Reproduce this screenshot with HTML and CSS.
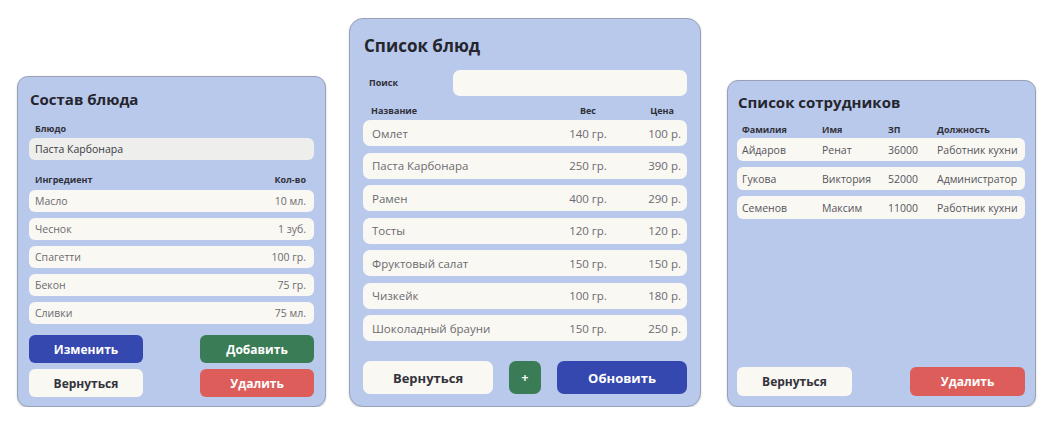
FILE: index.html
```html
<!DOCTYPE html>
<html lang="ru">
<head>
<meta charset="utf-8">
<link rel="stylesheet" href="styles.css">
</head>
<body>
<main class="stage">
  <section class="card card-compose">
    <h2 class="title">Состав блюда</h2>
    <div class="label">Блюдо</div>
    <div class="field">Паста Карбонара</div>
    <div class="head-row"><span>Ингредиент</span><span>Кол-во</span></div>
    <ul class="rows">
      <li class="row"><span>Масло</span><span>10 мл.</span></li>
      <li class="row"><span>Чеснок</span><span>1 зуб.</span></li>
      <li class="row"><span>Спагетти</span><span>100 гр.</span></li>
      <li class="row"><span>Бекон</span><span>75 гр.</span></li>
      <li class="row"><span>Сливки</span><span>75 мл.</span></li>
    </ul>
    <div class="btn-grid">
      <button class="btn blue">Изменить</button>
      <button class="btn green">Добавить</button>
      <button class="btn light">Вернуться</button>
      <button class="btn red">Удалить</button>
    </div>
  </section>

  <section class="card card-menu">
    <h2 class="title big">Список блюд</h2>
    <div class="search"><span class="label">Поиск</span><div class="search-input"></div></div>
    <div class="menu-head"><span>Название</span><span class="c">Вес</span><span class="r hr">Цена</span></div>
    <ul class="menu-rows">
      <li class="mrow"><span>Омлет</span><span class="c">140 гр.</span><span class="r">100 р.</span></li>
      <li class="mrow"><span>Паста Карбонара</span><span class="c">250 гр.</span><span class="r">390 р.</span></li>
      <li class="mrow"><span>Рамен</span><span class="c">400 гр.</span><span class="r">290 р.</span></li>
      <li class="mrow"><span>Тосты</span><span class="c">120 гр.</span><span class="r">120 р.</span></li>
      <li class="mrow"><span>Фруктовый салат</span><span class="c">150 гр.</span><span class="r">150 р.</span></li>
      <li class="mrow"><span>Чизкейк</span><span class="c">100 гр.</span><span class="r">180 р.</span></li>
      <li class="mrow"><span>Шоколадный брауни</span><span class="c">150 гр.</span><span class="r">250 р.</span></li>
    </ul>
    <div class="menu-btns">
      <button class="btn light wide">Вернуться</button>
      <button class="btn green plus">+</button>
      <button class="btn blue wide">Обновить</button>
    </div>
  </section>

  <section class="card card-staff">
    <h2 class="title">Список сотрудников</h2>
    <div class="staff-head"><span>Фамилия</span><span>Имя</span><span>ЗП</span><span>Должность</span></div>
    <ul class="staff-rows">
      <li class="srow"><span>Айдаров</span><span>Ренат</span><span>36000</span><span>Работник кухни</span></li>
      <li class="srow"><span>Гукова</span><span>Виктория</span><span>52000</span><span>Администратор</span></li>
      <li class="srow"><span>Семенов</span><span>Максим</span><span>11000</span><span>Работник кухни</span></li>
    </ul>
    <div class="staff-btns">
      <button class="btn light">Вернуться</button>
      <button class="btn red">Удалить</button>
    </div>
  </section>
</main>
</body>
</html>
```

FILE: styles.css
```css
* { box-sizing: border-box; }
html, body { margin: 0; padding: 0; background: #ffffff; }
body {
  font-family: "Open Sans", "Noto Sans", sans-serif;
  color: #2b2b33;
}
ul { list-style: none; margin: 0; padding: 0; }
h2 { margin: 0; }

.stage {
  display: flex;
  align-items: flex-end;
  height: 407px;
  padding-left: 17px;
}

.card {
  background: #b9c9ec;
  border: 1px solid #98a1b6;
  border-radius: 11px;
  box-shadow: 0 1px 2px rgba(60, 70, 90, 0.25);
  display: flex;
  flex-direction: column;
}

.title {
  font-size: 15px;
  font-weight: 700;
  line-height: 20px;
  color: #25252d;
}
.title.big { font-size: 17px; line-height: 22px; }

.label {
  font-size: 9px;
  font-weight: 700;
  line-height: 12px;
  color: #303038;
}

/* card 1 */
.card-compose {
  width: 309px;
  height: 331px;
  padding: 12px 11px 8px 11px;
}
.card-compose .title { margin-left: 1px; }
.card-compose .label { margin-top: 14px; margin-left: 6px; }
.field {
  margin-top: 3px;
  height: 22px;
  background: #eeeeec;
  border-radius: 6px;
  font-size: 10.5px;
  line-height: 22px;
  padding-left: 6px;
  color: #3a3a40;
}
.head-row {
  margin-top: 14px;
  display: flex;
  justify-content: space-between;
  font-size: 9px;
  font-weight: 700;
  line-height: 12px;
  padding: 0 8px 0 6px;
  color: #303038;
}
.rows {
  margin-top: 4px;
  display: flex;
  flex-direction: column;
  gap: 6px;
}
.row {
  height: 22px;
  background: #faf8f3;
  border-radius: 6px;
  display: flex;
  justify-content: space-between;
  align-items: center;
  padding: 0 8px 0 6px;
  font-size: 10.5px;
  color: #6b6b70;
}
.btn-grid {
  margin-top: 11px;
  display: grid;
  grid-template-columns: 114px 114px;
  justify-content: space-between;
  row-gap: 6px;
}

.btn {
  border: none;
  border-radius: 6px;
  font-family: "Open Sans", "Noto Sans", sans-serif;
  font-weight: 700;
  font-size: 12px;
  height: 28px;
  padding: 0;
  color: #ffffff;
}
.btn.blue { background: #3548b0; }
.btn.green { background: #3a7c55; }
.btn.red { background: #dd5d5b; }
.btn.light { background: #faf8f3; color: #33333b; }

/* card 2 */
.card-menu {
  width: 352px;
  height: 389px;
  margin-left: 23px;
  border-radius: 14px;
  padding: 16px 13px 12px 13px;
}
.card-menu .title { margin-left: 1px; }
.search {
  margin-top: 13px;
  display: flex;
  align-items: center;
  justify-content: space-between;
}
.search .label { margin-left: 6px; }
.search-input {
  width: 234px;
  height: 26px;
  background: #faf8f3;
  border-radius: 7px;
}
.menu-head, .mrow {
  display: grid;
  grid-template-columns: 1fr 40px 73px;
}
.menu-head {
  margin-top: 9px;
  font-size: 9px;
  font-weight: 700;
  line-height: 12px;
  padding: 0 6px 0 8px;
  color: #303038;
}
.c { text-align: center; }
.r { text-align: right; }
.hr { padding-right: 7px; }
.menu-rows {
  margin-top: 3px;
  display: flex;
  flex-direction: column;
  gap: 6.5px;
}
.mrow {
  height: 26px;
  background: #faf8f3;
  border-radius: 7px;
  align-items: center;
  padding: 0 6px 0 9px;
  font-size: 11.5px;
  color: #6b6b70;
  white-space: nowrap;
}
.menu-btns {
  margin-top: 20px;
  display: flex;
  justify-content: space-between;
}
.menu-btns .btn { height: 33px; font-size: 13px; border-radius: 7px; }
.menu-btns .wide { width: 130px; }
.menu-btns .plus { width: 32px; font-size: 12px; }

/* card 3 */
.card-staff {
  width: 309px;
  height: 327px;
  margin-left: 26px;
  padding: 11px 10px 10px 9px;
}
.card-staff .title { margin-left: 1px; }
.staff-head, .srow {
  display: grid;
  grid-template-columns: 80px 66px 49px 1fr;
}
.staff-head {
  margin-top: 12px;
  font-size: 9px;
  font-weight: 700;
  line-height: 12px;
  padding-left: 5px;
  color: #303038;
}
.staff-rows {
  margin-top: 2px;
  display: flex;
  flex-direction: column;
  gap: 6px;
}
.srow {
  height: 23px;
  background: #faf8f3;
  border-radius: 6px;
  align-items: center;
  padding-left: 5px;
  font-size: 10.5px;
  color: #55555b;
}
.staff-btns {
  margin-top: auto;
  display: flex;
  justify-content: space-between;
}
.staff-btns .btn { width: 115px; height: 29px; }
```
